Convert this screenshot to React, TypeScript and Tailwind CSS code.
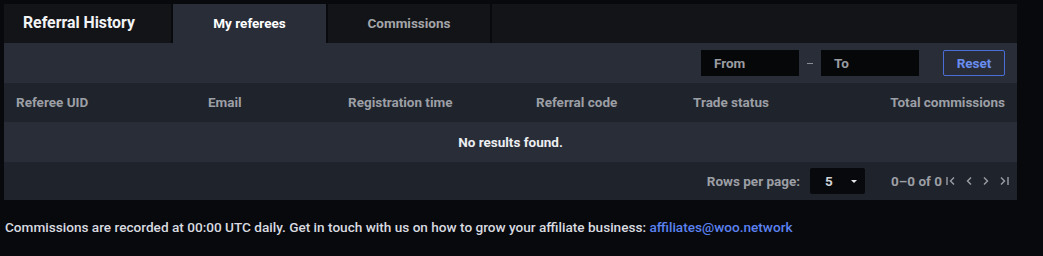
import React from "react";

const font = { fontFamily: "Roboto, 'Noto Sans', sans-serif" };

export default function App() {
  return (
    <div className="w-[1043px] h-[256px] bg-[#08090c] pt-[4px] pl-[4px]" style={font}>
      <div className="w-[1013px]">
        {/* Tabs */}
        <div className="flex h-[39px] gap-[2px]">
          <div className="w-[167px] bg-[#131418] flex items-center pl-[19px] pb-[1px] text-[15.8px] font-bold text-[#f2f3f5]">
            Referral History
          </div>
          <div className="w-[153px] bg-[#282d38] flex items-center justify-center text-[13.5px] font-bold text-white">
            My referees
          </div>
          <div className="w-[162px] bg-[#131418] flex items-center justify-center text-[13.5px] font-bold text-[#a3a5a9]">
            Commissions
          </div>
          <div className="flex-1 bg-[#131418]" />
        </div>
        {/* Toolbar */}
        <div className="h-[40px] bg-[#282d38] flex items-center justify-end pr-[12px]">
          <div className="w-[98px] h-[26px] bg-[#060709] flex items-center pl-[13px] text-[13.5px] font-bold text-[#9a9ca1]">
            From
          </div>
          <div className="w-[6px] h-[1px] bg-[#8a8d93] mx-[8px]" />
          <div className="w-[98px] h-[26px] bg-[#060709] flex items-center pl-[13px] text-[13.5px] font-bold text-[#9a9ca1]">
            To
          </div>
          <div className="ml-[24px] w-[62px] h-[26px] border border-[#4a6ed6] rounded-[2px] flex items-center justify-center text-[13.5px] font-bold text-[#6a8df0]">
            Reset
          </div>
        </div>
        {/* Header */}
        <div className="h-[39px] bg-[#1f232b] flex items-center text-[13.5px] font-bold text-[#9c9fa5] pr-[12px]">
          <div className="w-[204px] pl-[12px]">Referee UID</div>
          <div className="w-[140px]">Email</div>
          <div className="w-[188px]">Registration time</div>
          <div className="w-[157px]">Referral code</div>
          <div className="flex-1">Trade status</div>
          <div>Total commissions</div>
        </div>
        {/* Empty row */}
        <div className="h-[40px] bg-[#282d38] flex items-center justify-center text-[13.5px] font-bold text-[#eceef1]">
          No results found.
        </div>
        {/* Pagination */}
        <div className="h-[38px] bg-[#1f232b] flex items-center justify-end pr-[8px] text-[13.5px] font-bold text-[#9c9fa5]">
          <span>Rows per page:</span>
          <div className="ml-[10px] w-[55px] h-[26px] bg-[#08090c] rounded-[2px] flex items-center pl-[15px] text-[#d0d2d6]">
            <span>5</span>
            <svg width="8" height="5" viewBox="0 0 8 5" className="ml-[17px]">
              <path d="M1 1 L4 4 L7 1 Z" fill="#e6e7ea" />
            </svg>
          </div>
          <span className="ml-[26px] text-[#9c9fa5]">0–0 of 0</span>
          <div className="flex items-center ml-[4px] gap-[9px] text-[#9c9fa5]">
            <svg width="10" height="10" viewBox="0 0 10 10" fill="none" stroke="#9c9fa5" strokeWidth="1.4">
              <path d="M1 1 V9" />
              <path d="M8 1.5 L4.5 5 L8 8.5" />
            </svg>
            <svg width="8" height="10" viewBox="0 0 8 10" fill="none" stroke="#9c9fa5" strokeWidth="1.4">
              <path d="M6 1.5 L2.5 5 L6 8.5" />
            </svg>
            <svg width="8" height="10" viewBox="0 0 8 10" fill="none" stroke="#9c9fa5" strokeWidth="1.4">
              <path d="M2 1.5 L5.5 5 L2 8.5" />
            </svg>
            <svg width="10" height="10" viewBox="0 0 10 10" fill="none" stroke="#9c9fa5" strokeWidth="1.4">
              <path d="M2 1.5 L5.5 5 L2 8.5" />
              <path d="M9 1 V9" />
            </svg>
          </div>
        </div>
      </div>
      <div className="mt-[17px] pl-[1px] text-[13.6px] font-medium text-[#d9dbe0]">
        Commissions are recorded at 00:00 UTC daily. Get in touch with us on how to grow your affiliate business:{" "}
        <span className="text-[#5b82f0]">affiliates@woo.network</span>
      </div>
    </div>
  );
}
